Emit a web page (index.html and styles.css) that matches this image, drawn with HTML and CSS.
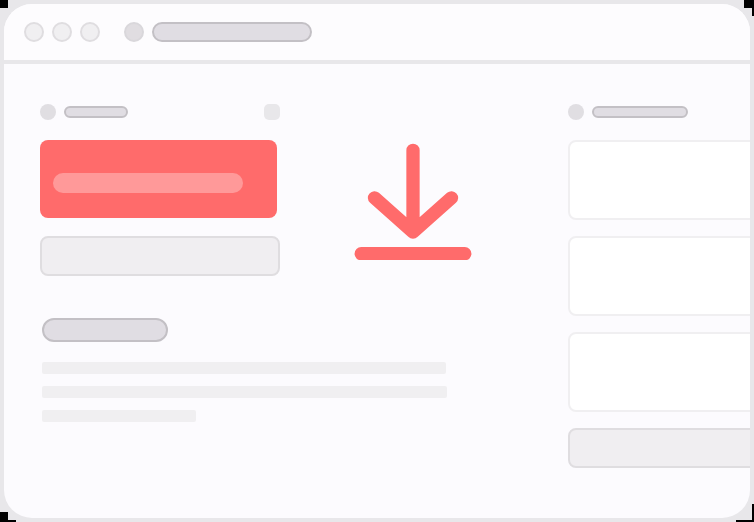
FILE: index.html
```
<!DOCTYPE html>
<html lang="en">
<head>
<meta charset="utf-8">
<title>Download</title>
<link rel="stylesheet" href="styles.css">
</head>
<body>
<div class="frame">
  <div class="window">
    <header class="bar">
      <div class="lights"><i class="light"></i><i class="light"></i><i class="light"></i></div>
      <i class="favicon"></i>
      <i class="pill address"></i>
    </header>
    <div class="content">
      <main class="main">
        <div class="top">
          <section class="list">
            <div class="heading"><i class="dot"></i><i class="pill label"></i><i class="action"></i></div>
            <div class="selected"><i class="selected-line"></i></div>
            <div class="button"></div>
          </section>
          <svg class="download" width="120" height="120" viewBox="0 0 120 120" fill="none" stroke="#ff6b6b" stroke-width="13.3" stroke-linecap="round" stroke-linejoin="round">
            <path d="M60 10.3V92M21.500 57.800L60 92L98.500 57.800M8.200 113.700H111.800"/>
          </svg>
        </div>
        <section class="article">
          <div class="pill title"></div>
          <div class="line"></div>
          <div class="line line-full"></div>
          <div class="line line-short"></div>
        </section>
      </main>
      <aside class="side">
        <div class="heading"><i class="dot"></i><i class="pill label label-wide"></i></div>
        <div class="card"></div>
        <div class="card"></div>
        <div class="card"></div>
        <div class="button"></div>
      </aside>
    </div>
  </div>
</div>
</body>
</html>
```
FILE: styles.css
```
* { box-sizing: border-box; }
html { background: #000; }
body { margin: 0; overflow: hidden; }
i { display: block; flex: none; }

.frame {
  width: 754px;
  height: 522px;
  padding: 4px;
  background: #e8e7ea;
  clip-path: polygon(8px 0, 744px 0, 744px 8px, 752px 8px, 752px 16px, 754px 16px, 754px 504px, 752px 504px, 752px 520px, 736px 520px, 736px 522px, 16px 522px, 16px 520px, 8px 520px, 8px 512px, 0 512px, 0 8px, 8px 8px);
}
.window {
  height: 514px;
  overflow: hidden;
  border-radius: 28px;
  background: #fcfbfe;
}
.bar {
  display: flex;
  align-items: center;
  height: 60px;
  padding-left: 20px;
  border-bottom: 4px solid #e8e7ea;
  background: #fdfcfe;
}
.lights { display: flex; gap: 8px; margin-right: 24px; }
.light, .favicon {
  width: 20px;
  height: 20px;
  border: 2px solid #dfdde0;
  border-radius: 50%;
  background: #f0eff1;
}
.favicon { margin-right: 8px; border-color: #d9d7db; background: #e0dde1; }
.pill {
  border: 2px solid #c3c0c5;
  border-radius: 12px;
  background: #e0dde3;
}
.address { width: 160px; height: 20px; }

.content { display: flex; height: 454px; padding: 40px 0 0 36px; }
.main { flex: none; width: 528px; }
.top { display: flex; }
.list { width: 240px; }
.heading { display: flex; align-items: center; height: 16px; margin-bottom: 20px; }
.dot { width: 16px; height: 16px; margin-right: 8px; border-radius: 50%; background: #e0dee2; }
.label { width: 64px; height: 12px; }
.label-wide { width: 96px; }
.action { width: 16px; height: 16px; margin-left: auto; border-radius: 5px; background: #e8e7ea; }
.selected {
  width: 237px;
  height: 78px;
  margin-bottom: 18px;
  padding: 33px 0 0 13px;
  border-radius: 8px;
  background: #ff6b6b;
}
.selected-line { width: 190px; height: 20px; border-radius: 10px; background: #ff9999; }
.button { height: 40px; border: 2px solid #dfdde0; border-radius: 8px; background: #f0eef1; }
.download { display: block; margin: 36px 0 0 73px; }

.article { margin: 42px 0 0 2px; }
.title { width: 126px; height: 24px; margin-bottom: 20px; }
.line { width: 404px; height: 12px; margin-bottom: 12px; border-radius: 2px; background: #f0eff1; }
.line-full { width: 405px; }
.line-short { width: 154px; }

.side { flex: none; width: 240px; }
.card { height: 80px; margin-bottom: 16px; border: 2px solid #f0eff1; border-radius: 8px; background: #fff; }
```
